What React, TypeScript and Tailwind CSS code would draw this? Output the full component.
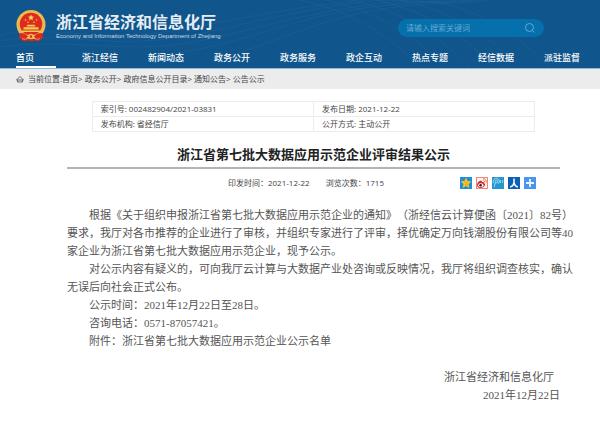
import React from "react";

const sans = "font-['Open_Sans','Noto_Sans_CJK_SC',sans-serif]";
const body = "font-['Liberation_Serif','Noto_Sans_CJK_SC',serif]";

const navItems = ["首页", "浙江经信", "新闻动态", "政务公开", "政务服务", "政企互动", "热点专题", "经信数据", "派驻监督"];
const crumbs = ["首页", "政务公开", "政府信息公开目录", "通知公告", "公告公示"];

function Emblem() {
  return (
    <svg viewBox="0 0 30 32" className="h-8 w-[30px] shrink-0" aria-hidden="true">
      <path d="M4 20h22l1 8-5 3.500-4-1-3 1-3-1-4 1-5-3.500z" fill="#d3281f" />
      <circle cx="15" cy="14.500" r="14.500" fill="#ecc052" />
      <circle cx="15" cy="14" r="13" fill="none" stroke="#d39c36" strokeWidth=".5" strokeDasharray="1.500 1" />
      <circle cx="15" cy="14" r="11.300" fill="#de2b20" />
      <path d="m15 4.500.9 2 2.200.2-1.700 1.500.5 2.100-1.900-1.100-1.900 1.100.5-2.100-1.700-1.500 2.200-.2z" fill="#f5d35c" />
      <g fill="#f3cd52">
        <circle cx="9.500" cy="10" r=".8" />
        <circle cx="12" cy="12.200" r=".8" />
        <circle cx="18" cy="12.200" r=".8" />
        <circle cx="20.500" cy="10" r=".8" />
        <path d="M10.500 16.500h9l-1-1.800h-7zM7.500 19.500h15v-2.200h-15zM5.500 22h19v-1.500h-19z" />
      </g>
      <path d="M4 23c4 0 6 1 8 3.500l-4 4-4-3zM26 23c-4 0-6 1-8 3.500l4 4 4-3z" fill="#dc2a20" />
      <circle cx="15" cy="26.500" r="2.800" fill="#ecc052" />
      <circle cx="15" cy="26.500" r="1.200" fill="#d3281f" />
      <path d="M6 28.500c3 1.500 5 .5 7-1M24 28.500c-3 1.500-5 .5-7-1" fill="none" stroke="#ecc052" strokeWidth=".7" />
    </svg>
  );
}

function Waves() {
  return (
    <svg viewBox="0 0 600 67" preserveAspectRatio="none" className="absolute inset-0 h-full w-full" aria-hidden="true">
      <g fill="none" stroke="#3f82b5" strokeOpacity=".22" strokeWidth=".7">
        <path d="M0 34C50 26 90 38 140 34S220 20 300 8 380 0 400 0" />
        <path d="M0 40C60 32 100 44 150 40S230 25 310 10 400 2 440 2" />
        <path d="M0 46C60 38 110 50 165 45S250 26 330 11 420 4 470 0" />
        <path d="M180 52C250 40 290 20 350 10S440 4 480 0" />
        <path d="M210 60C270 45 310 22 370 11S450 6 490 0" />
        <path d="M300 0C350 10 390 35 420 67" />
        <path d="M325 0C375 10 415 35 445 67" />
        <path d="M350 0C400 10 440 35 470 67" />
        <path d="M375 0C425 10 465 35 495 67" />
        <path d="M400 0C450 10 490 35 520 67" />
        <path d="M430 0C480 10 520 35 550 67" />
      </g>
    </svg>
  );
}

function ShareIcons() {
  const cls = "block size-3";
  return (
    <div className="flex gap-1">
      <button type="button" aria-label="QQ空间">
        <svg viewBox="0 0 12 12" className={cls}>
          <rect width="12" height="12" fill="#1f8fd8" />
          <path d="m6 .8 1.600 3.300 3.700.5-2.700 2.500.7 3.800L6 9.100l-3.300 1.800.7-3.800L.7 4.600l3.700-.5z" fill="#fdc32a" />
          <path d="M4.500 5.200h3L5 7.800h3" fill="none" stroke="#f08d1c" strokeWidth=".6" />
        </svg>
      </button>
      <button type="button" aria-label="新浪微博">
        <svg viewBox="0 0 12 12" className={cls}>
          <rect x=".5" y=".5" width="11" height="11" fill="#fff1ee" stroke="#e98b83" />
          <path d="M1 8c0-2.500 3-5 4.500-4.200.6.300.5 1 .3 1.500 1.500-.5 2.500 0 2.200 1 1 .3 1.300 1 1 1.800C8.300 10 6.500 11 4.500 11S1 10 1 8z" fill="#d9232c" />
          <ellipse cx="4.800" cy="8.200" rx="2.700" ry="1.900" fill="#fff" />
          <circle cx="4.600" cy="8.300" r="1.300" fill="#222" />
          <path d="M7 1.800c2.300-.3 3.700 1.400 3.200 3.700M7.200 3.500c1 0 1.500.6 1.300 1.600" fill="none" stroke="#ef7a25" strokeWidth="1" />
        </svg>
      </button>
      <button type="button" aria-label="腾讯微博">
        <svg viewBox="0 0 12 12" className={cls}>
          <rect width="12" height="12" fill="#2596cf" />
          <g fill="none" stroke="#c4e8f8" strokeWidth=".8">
            <circle cx="4.500" cy="4.500" r="1.200" />
            <path d="M2.200 6.500A3 3 0 1 1 6.200 6.700M4 5.700C3 7 2.300 8.500 2.300 10" />
            <path d="M8.300 3v3M10 3c1 .8 1 2.200 0 3" />
          </g>
        </svg>
      </button>
      <button type="button" aria-label="人人网">
        <svg viewBox="0 0 12 12" className={cls}>
          <rect width="12" height="12" fill="#0b60b5" />
          <path d="M6 1.500v4c0 2-1.500 3.500-3.800 4.700M6 5.500c0 2 1.500 3.500 3.800 4.700" fill="none" stroke="#fff" strokeWidth="1.500" />
        </svg>
      </button>
      <button type="button" aria-label="更多分享">
        <svg viewBox="0 0 12 12" className={cls}>
          <rect width="12" height="12" fill="#4c94ed" />
          <path d="M6 2v8M2 6h8" stroke="#e8f4ff" strokeWidth="1.800" />
        </svg>
      </button>
    </div>
  );
}

export default function App() {
  return (
    <div className={`min-h-screen bg-white text-[#444] ${sans}`}>
      <header className="relative border-b border-[#8dbbd8] bg-[#10558b]">
        <Waves />
        <div className="relative">
          <div className="flex h-12 items-center justify-between pr-14 pl-4">
            <div className="flex items-center gap-[10px] pt-1">
              <Emblem />
              <div>
                <h1 className="text-[16px] leading-5 font-bold text-[#e3edf4]">浙江省经济和信息化厅</h1>
                <p className="font-['Liberation_Sans',sans-serif] text-[6px] leading-2 text-[#c9dce9]">
                  Economy and Information Technology Department of Zhejiang
                </p>
              </div>
            </div>
            <form className="mt-2 flex h-[18px] w-[146px] items-center rounded-full bg-[#0670ad] px-2" onSubmit={(e) => e.preventDefault()}>
              <input
                type="text"
                aria-label="搜索关键词"
                placeholder="请输入搜索关键词"
                className="w-full min-w-0 bg-transparent text-[8px] leading-3 text-white outline-none placeholder:text-[#63a9d0]"
              />
              <button type="submit" aria-label="搜索">
                <svg viewBox="0 0 12 12" className="size-3" fill="none" stroke="#63a9d0" strokeWidth="1">
                  <circle cx="5.500" cy="5.500" r="4" />
                  <path d="m8.500 8.500 2 2" />
                </svg>
              </button>
            </form>
          </div>
          <nav className="flex justify-between px-4 pt-[2px] text-[9px] leading-4 font-medium text-white">
            {navItems.map((t, i) => (
              <a
                key={t}
                href="#"
                className={i === 0 ? "w-10 border-b-2 border-white" : "w-10 border-b-2 border-transparent"}
              >
                {t}
              </a>
            ))}
          </nav>
        </div>
      </header>

      <div className="flex h-5 items-center gap-1 bg-[#ececec] px-4 text-[8px] leading-3">
        <svg viewBox="0 0 8 8" className="size-2" fill="none" stroke="#666" strokeWidth="1" aria-hidden="true">
          <path d="M.5 5 4 1.500 7.500 5zM1.500 5v2h5V5" />
        </svg>
        <p>
          当前位置:
          {crumbs.map((c, i) => (
            <React.Fragment key={c}>
              <a href="#">{c}</a>
              {i < crumbs.length - 1 && "> "}
            </React.Fragment>
          ))}
        </p>
      </div>

      <main className="pr-10 pl-[67px]">
        <table className="mx-auto mt-3 w-[90%] table-fixed border-collapse text-[8px] leading-[14px]">
          <tbody>
            <tr>
              <td className="border border-[#ececec] px-2">索引号: 002482904/2021-03831</td>
              <td className="border border-[#ececec] px-2">发布日期: 2021-12-22</td>
            </tr>
            <tr>
              <td className="border border-[#ececec] px-2">发布机构: 省经信厅</td>
              <td className="border border-[#ececec] px-2">公开方式: 主动公开</td>
            </tr>
          </tbody>
        </table>

        <h2 className="mt-3 text-center text-[13px] leading-5 font-bold text-[#222]">
          浙江省第七批大数据应用示范企业评审结果公示
        </h2>
        <div className="mt-[3px] flex items-center border-t-2 border-[#b4b4b4] pt-2 pr-6 text-[8px] leading-3">
          <span className="ml-auto">印发时间：2021-12-22</span>
          <span className="mr-[76px] ml-4">浏览次数：1715</span>
          <ShareIcons />
        </div>

        <article className={`mt-[17px] text-[11px] leading-[18px] whitespace-nowrap text-[#555] [text-spacing-trim:space-all] ${body}`}>
          <p className="indent-[22px]">
            根据《关于组织申报浙江省第七批大数据应用示范企业的通知》（浙经信云计算便函〔2021〕82号）
            <br />
            要求，我厅对各市推荐的企业进行了审核，并组织专家进行了评审，择优确定万向钱潮股份有限公司等40
            <br />
            家企业为浙江省第七批大数据应用示范企业，现予公示。
          </p>
          <p className="indent-[22px]">
            对公示内容有疑义的，可向我厅云计算与大数据产业处咨询或反映情况，我厅将组织调查核实，确认
            <br />
            无误后向社会正式公布。
          </p>
          <p className="indent-[22px]">公示时间：2021年12月22日至28日。</p>
          <p className="indent-[22px]">咨询电话：0571-87057421。</p>
          <p className="indent-[22px]">附件：浙江省第七批大数据应用示范企业公示名单</p>
          <div className="mt-[18px] text-right">
            <p className="pr-[6px]">浙江省经济和信息化厅</p>
            <p>2021年12月22日</p>
          </div>
        </article>
      </main>
    </div>
  );
}
